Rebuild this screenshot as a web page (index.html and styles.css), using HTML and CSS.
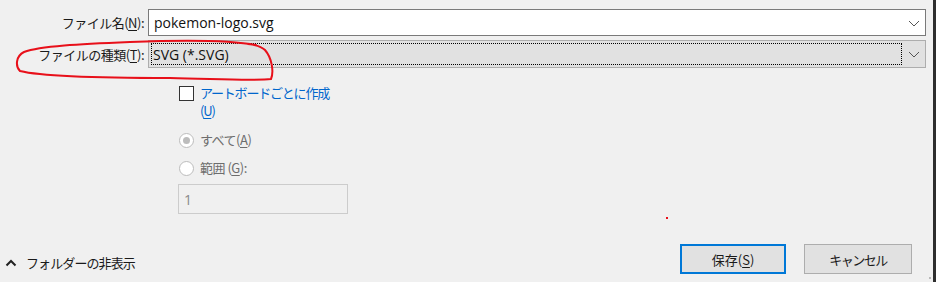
FILE: index.html
```html
<!DOCTYPE html>
<html lang="ja">
<head>
<meta charset="utf-8">
<link rel="stylesheet" href="styles.css">
</head>
<body>
<div class="dialog">
  <div class="fields">
    <div class="row">
      <label class="lbl">ファイル名(<u>N</u>):</label>
      <div class="input white">
        <span class="val">pokemon-logo.svg</span>
        <svg class="chev" width="12" height="7" viewBox="0 0 12 7"><path d="M1 1 L6 6 L11 1" fill="none" stroke="#555" stroke-width="1"/></svg>
      </div>
    </div>
    <div class="row">
      <label class="lbl">ファイルの種類(<u>T</u>):</label>
      <div class="input combo">
        <span class="focus"><span class="val">SVG (*.SVG)</span></span>
        <svg class="chev" width="12" height="7" viewBox="0 0 12 7"><path d="M1 1 L6 6 L11 1" fill="none" stroke="#555" stroke-width="1"/></svg>
      </div>
    </div>
  </div>

  <div class="options">
    <div class="opt check">
      <span class="box"></span>
      <span class="link">アートボードごとに作成<br>(<u>U</u>)</span>
    </div>
    <div class="opt radio">
      <span class="circle on"></span>
      <span class="dis">すべて(<u>A</u>)</span>
    </div>
    <div class="opt radio">
      <span class="circle"></span>
      <span class="dis">範囲 (<u>G</u>):</span>
    </div>
    <div class="range">1</div>
  </div>

  <div class="footer">
    <div class="toggle">
      <svg width="12" height="8" viewBox="0 0 12 8"><path d="M1.5 6.5 L6 2 L10.5 6.5" fill="none" stroke="#222" stroke-width="2"/></svg>
      <span>フォルダーの非表示</span>
    </div>
    <div class="buttons">
      <button class="btn primary">保存(<u>S</u>)</button>
      <button class="btn kana">キャンセル</button>
    </div>
  </div>

  <span class="dot"></span>
  <svg class="scribble" width="936" height="282" viewBox="0 0 936 282">
    <path d="M256 45 C 230 40, 180 40, 130 42 C 80 44, 40 46, 24 52 C 16 56, 15 66, 20 71 C 40 76, 100 78, 170 78 C 220 79, 255 81, 271 79 C 274 72, 272 58, 265 50 C 262 47, 258 45, 248 44" fill="none" stroke="#e8101a" stroke-width="2" stroke-linecap="round"/>
  </svg>
  <span class="edge"></span>
  <span class="grip"></span>
</div>
</body>
</html>
```
FILE: styles.css
```css
html, body {
  margin: 0;
  padding: 0;
  background: #f0f0f0;
}
.dialog {
  position: relative;
  width: 936px;
  height: 282px;
  overflow: hidden;
  font-family: "Noto Sans CJK JP", "Open Sans", sans-serif;
  font-size: 13px;
  color: #1a1a1a;
  display: flex;
  flex-direction: column;
}
u { text-decoration: underline; text-underline-offset: 2px; }
.fields {
  padding-top: 9px;
  display: flex;
  flex-direction: column;
  gap: 4px;
}
.row {
  display: grid;
  grid-template-columns: 144px 778px;
  column-gap: 4px;
  align-items: center;
}
.lbl {
  text-align: right;
  white-space: nowrap;
  letter-spacing: -0.5px;
}
.input {
  box-sizing: border-box;
  height: 27px;
  display: flex;
  align-items: center;
  position: relative;
}
.input.white {
  background: #fff;
  border: 1px solid #7a7a7a;
  padding-left: 5px;
}
.input.combo {
  height: 28px;
  background: #e1e1e1;
  border: 1px solid #adadad;
  padding: 2px;
}
.focus {
  flex: 1;
  height: 22px;
  box-sizing: border-box;
  border: 1px dotted #000;
  margin-right: 21px;
  display: flex;
  align-items: center;
  padding-left: 1px;
}
.val {
  font-family: "Open Sans", "Noto Sans CJK JP", sans-serif;
  font-size: 14px;
  letter-spacing: 0;
  color: #111;
}
.chev {
  position: absolute;
  right: 5px;
  top: 50%;
  margin-top: -3px;
}
.options {
  margin-left: 178px;
  margin-top: 17px;
  display: flex;
  flex-direction: column;
}
.opt {
  display: flex;
  align-items: flex-start;
  gap: 6px;
}
.check { line-height: 18px; }
.box {
  width: 13px;
  height: 13px;
  border: 1px solid #333;
  background: #fff;
  margin-top: 1px;
  margin-left: 1px;
}
.link {
  color: #0066cc;
  letter-spacing: -1.2px;
  margin-top: -1px;
}
.radio {
  margin-top: 11px;
  align-items: center;
  line-height: 18px;
}
.radio + .radio { margin-top: 10px; }
.circle {
  width: 13px;
  height: 13px;
  border-radius: 50%;
  border: 1px solid #bcbcbc;
  background: #fff;
  position: relative;
  margin-left: 1px;
}
.circle.on::after {
  content: "";
  position: absolute;
  left: 3px;
  top: 3px;
  width: 7px;
  height: 7px;
  border-radius: 50%;
  background: #bcbcbc;
}
.dis { color: #6d6d6d; letter-spacing: -0.5px; }
.range {
  margin-top: 7px;
  box-sizing: border-box;
  width: 170px;
  height: 30px;
  border: 1px solid #cccccc;
  color: #8a8a8a;
  font-family: "Open Sans", sans-serif;
  font-size: 14px;
  padding-left: 5px;
  display: flex;
  align-items: center;
}
.footer {
  margin-top: auto;
  margin-bottom: 8px;
  display: flex;
  align-items: flex-end;
  justify-content: space-between;
}
.toggle {
  display: flex;
  align-items: center;
  gap: 9px;
  padding-left: 5px;
  margin-bottom: 2px;
  font-size: 13px;
  letter-spacing: -0.9px;
}
.buttons {
  display: flex;
  gap: 18px;
  margin-right: 24px;
}
.btn {
  box-sizing: border-box;
  height: 30px;
  width: 108px;
  background: #e1e1e1;
  border: 1px solid #adadad;
  font-family: "Noto Sans CJK JP", sans-serif;
  font-size: 13px;
  color: #1a1a1a;
  padding: 0;
}
.btn.kana { letter-spacing: -1.5px; }
.btn.primary {
  width: 106px;
  border: 2px solid #0078d7;
}
.dot {
  position: absolute;
  left: 666px;
  top: 217px;
  width: 2px;
  height: 2px;
  background: #e8101a;
}
.scribble {
  position: absolute;
  left: 0;
  top: 0;
  pointer-events: none;
}
.edge {
  position: absolute;
  right: 0;
  top: 0;
  width: 3px;
  height: 282px;
  background: #2e2e2e;
}
.grip {
  position: absolute;
  right: 5px;
  bottom: 3px;
  width: 2px;
  height: 2px;
  background: #b8b8b8;
}
```
